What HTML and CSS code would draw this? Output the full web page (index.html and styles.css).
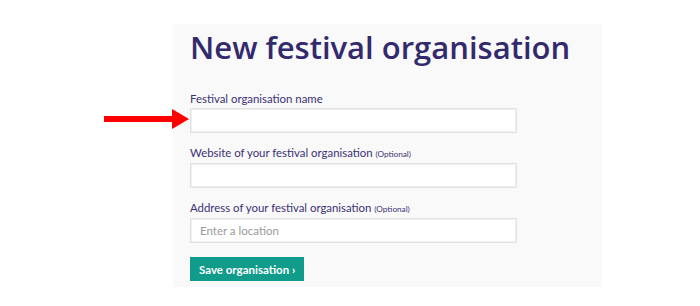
FILE: index.html
```html
<!DOCTYPE html>
<html lang="en">

<head>
    <meta charset="UTF-8">
    <meta name="viewport" content="width=device-width, initial-scale=1.0">
    <title>New festival organisation</title>
    <link rel="stylesheet" href="styles.css">
</head>

<body>
    <div class="page">
        <div class="panel">
            <h1>New festival organisation</h1>
            <form class="org-form">
                <div class="field">
                    <label for="orgName">Festival organisation name</label>
                    <div class="input-wrap">
                        <div class="arrow"></div>
                        <input type="text" id="orgName">
                    </div>
                </div>
                <div class="field">
                    <label for="orgWebsite">Website of your festival organisation <small>(Optional)</small></label>
                    <input type="text" id="orgWebsite">
                </div>
                <div class="field">
                    <label for="orgAddress">Address of your festival organisation <small>(Optional)</small></label>
                    <input type="text" id="orgAddress" placeholder="Enter a location">
                </div>
                <button type="button" class="save">Save organisation &rsaquo;</button>
            </form>
        </div>
    </div>
</body>

</html>
```

FILE: styles.css
```css
body {
    margin: 0;
    font-family: Lato, "Open Sans", sans-serif;
    background-color: #fff;
    color: #332a6e;
}

.page {
    padding: 24px 0 0 173px;
}

.panel {
    width: 429px;
    height: 263px;
    box-sizing: border-box;
    background-color: #f9f9f9;
    padding: 1px 85px 0 17px;
}

h1 {
    margin: 0 0 23px;
    font-family: "Open Sans", Lato, sans-serif;
    font-size: 31px;
    line-height: 44px;
    font-weight: 600;
    color: #332a6e;
    white-space: nowrap;
}

.field {
    display: flex;
    flex-direction: column;
    margin-bottom: 13px;
}

label {
    font-size: 11.4px;
    line-height: 14px;
    margin-bottom: 2px;
    color: #3b3175;
    white-space: nowrap;
}

label small {
    font-size: 8.2px;
}

.input-wrap {
    position: relative;
}

input {
    display: block;
    width: 100%;
    box-sizing: border-box;
    height: 25px;
    border: 1px solid #e2e2e2;
    box-shadow: inset 0 0 0 1px #f0f0f0;
    background-color: #fff;
    padding: 0 9px;
    font-family: inherit;
    font-size: 11.5px;
    color: #333;
    outline: none;
}

input::placeholder {
    color: #9a9a9a;
}

.arrow {
    position: absolute;
    left: -86px;
    top: 1px;
    width: 86px;
    height: 19px;
}

.arrow::before {
    content: '';
    position: absolute;
    left: 0;
    top: 7px;
    width: 69px;
    height: 6px;
    background-color: #f00;
}

.arrow::after {
    content: '';
    position: absolute;
    right: 1px;
    top: 0;
    border-left: 17px solid #f00;
    border-top: 10px solid transparent;
    border-bottom: 10px solid transparent;
}

.save {
    margin-top: 1px;
    height: 24px;
    padding: 0 9px;
    border: none;
    background-color: #119b8a;
    color: #fff;
    font-family: inherit;
    font-size: 11.5px;
    font-weight: 700;
    cursor: pointer;
}
```
